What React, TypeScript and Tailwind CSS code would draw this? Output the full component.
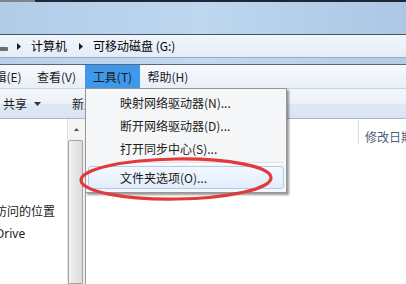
import React from 'react';

const font = "font-['Microsoft_YaHei','Noto_Sans_CJK_SC','Noto_Sans',sans-serif]";

const MenuBarItem = ({ label, w, active }: { label: string; w: string; active?: boolean }) => (
  <div className={`${w} h-full flex items-center justify-center shrink-0 ${active ? 'bg-[#3f98e9]' : ''}`}>
    {label}
  </div>
);

const DropItem = ({ label, selected }: { label: string; selected?: boolean }) => (
  <div className="relative h-[23px] flex items-center pl-[34px]">
    {selected && (
      <div className="absolute inset-y-0 left-[2px] right-[2px] rounded-[3px] border border-[#aecdf2] bg-gradient-to-b from-[#f3f8fe] to-[#e2edfb]" />
    )}
    <span className="relative">{label}</span>
  </div>
);

const App = () => {
  return (
    <div className={`relative w-[406px] h-[284px] overflow-hidden bg-white text-[12px] text-[#1b1b1b] ${font}`}>
      {/* window frame top */}
      <div className="flex h-[2px]">
        <div className="w-[35px] bg-[#7d8590]" />
        <div className="flex-1 bg-[#1c2837]" />
      </div>
      <div className="h-[32px] bg-gradient-to-r from-[#b2cce8] via-[#bed7ef] to-[#acc7e4]" />
      <div className="h-px bg-[#44566c]" />

      {/* address bar */}
      <div className="h-[22px] flex items-center bg-gradient-to-b from-[#f1f6fb] to-[#e4edf7] text-black">
        <div className="w-[8px] h-[4px] mt-[6px] bg-[#6d6d6d] rounded-r-[1px]" />
        <svg width="4" height="7" viewBox="0 0 4 7" className="ml-[9px]">
          <polygon points="0,0 4,3.5 0,7" fill="#1a1a1a" />
        </svg>
        <span className="ml-[10px]">计算机</span>
        <svg width="4" height="7" viewBox="0 0 4 7" className="ml-[12px]">
          <polygon points="0,0 4,3.5 0,7" fill="#1a1a1a" />
        </svg>
        <span className="ml-[10px]">可移动磁盘 (G:)</span>
      </div>
      <div className="h-px bg-[#9aabbd]" />
      <div className="h-[6px] bg-gradient-to-r from-[#b8d1ea] via-[#c2d9ef] to-[#b3cce7]" />
      <div className="h-px bg-[#56687e]" />

      {/* menu bar */}
      <div className="h-[23px] flex bg-gradient-to-b from-[#f7f9fc] to-[#e9eff7] ml-[-24px]">
        <MenuBarItem label="编辑(E)" w="w-[52px]" />
        <MenuBarItem label="查看(V)" w="w-[57px]" />
        <MenuBarItem label="工具(T)" w="w-[55px]" active />
        <MenuBarItem label="帮助(H)" w="w-[56px]" />
      </div>
      <div className="h-px bg-[#c9d5e3]" />

      {/* toolbar */}
      <div className="h-[29px] flex items-center bg-[linear-gradient(#f4f7fb,#ecf2f9_48%,#dfe9f4_52%,#dae5f2)]">
        <span className="ml-[3px]">共享</span>
        <svg width="7" height="4" viewBox="0 0 7 4" className="ml-[7px] mt-px">
          <polygon points="0,0 7,0 3.5,4" fill="#2a3442" />
        </svg>
        <span className="ml-[31px]">新建文件夹</span>
      </div>
      <div className="h-px bg-[#a8b8ca]" />

      {/* content */}
      <div className="flex h-[165px]">
        <div className="w-[67px] overflow-hidden whitespace-nowrap pt-[80px]">
          <div className="h-[23px] flex items-center ml-[-29px]">最近访问的位置</div>
          <div className="h-[23px] flex items-center ml-[-28px] font-['Segoe_UI','Noto_Sans',sans-serif]">OneDrive</div>
        </div>
        <div className="w-[18px] flex flex-col bg-[#eeeeee] border-l border-[#e2e2e2]">
          <div className="h-[20px] flex items-center justify-center bg-[#f4f4f4]">
            <svg width="5" height="3" viewBox="0 0 5 3">
              <polygon points="0,3 5,3 2.5,0" fill="#505050" />
            </svg>
          </div>
          <div className="w-[15px] flex-1 mt-[1px] rounded-t-[2px] border border-[#a5a5a5] bg-gradient-to-r from-[#f2f2f2] to-[#dcdcdc]" />
        </div>
        <div className="w-px bg-[#9a9a9a]" />
        <div className="flex-1 flex justify-end">
          <div className="w-[48px] h-[26px] flex overflow-hidden">
            <div className="w-px shrink-0 bg-[#d5dde6] h-[24px] mt-px" />
            <span className="ml-[6px] mt-[9px] text-[#4c607a] whitespace-nowrap">修改日期</span>
          </div>
        </div>
      </div>

      {/* dropdown menu */}
      <div className="absolute left-[85px] top-[88px] w-[202px] h-[105px] border border-[#979797] bg-[#f5f6f7] shadow-[2px_2px_2px_rgba(0,0,0,0.4)] pt-[2px]">
        <DropItem label="映射网络驱动器(N)..." />
        <DropItem label="断开网络驱动器(D)..." />
        <DropItem label="打开同步中心(S)..." />
        <div className="h-[6px] flex flex-col justify-center pl-[30px] pr-[2px]">
          <div className="h-px bg-[#e0e0e0]" />
          <div className="h-px bg-white" />
        </div>
        <DropItem label="文件夹选项(O)..." selected />
      </div>

      {/* red annotation */}
      <svg className="absolute left-0 top-0 pointer-events-none" width="406" height="284">
        <ellipse cx="176" cy="179" rx="95" ry="20" fill="none" stroke="#e23a3c" strokeWidth="3.2" transform="rotate(-0.8 176 179)" />
      </svg>
    </div>
  );
};

export default App;
